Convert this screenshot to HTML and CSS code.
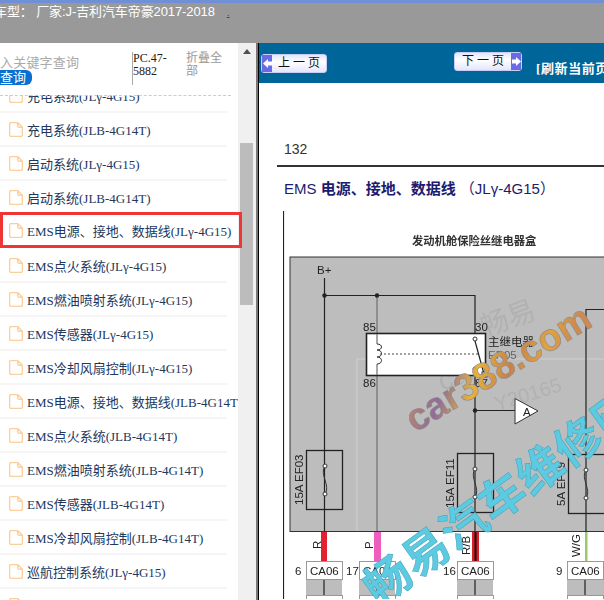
FILE: index.html
```html
<!DOCTYPE html>
<html lang="zh-CN">
<head>
<meta charset="UTF-8">
<meta name="viewport" content="width=device-width, initial-scale=1.0">
<title>车型</title>
<link rel="stylesheet" href="styles.css">
</head>
<body>

<svg class="icon-defs" width="0" height="0">
    <symbol id="fileIcon" viewBox="1 1 12 13">
        <path d="M1.500 2.500a1 1 0 0 1 1-1h6l4 4v7a1 1 0 0 1-1 1h-9a1 1 0 0 1-1-1zM8.500 1.500v3a1 1 0 0 0 1 1h3"/>
    </symbol>
</svg>

<div class="topbar">
    <span class="car-name">车型： 厂家:J-吉利汽车帝豪2017-2018</span>
    <a class="top-link" href="#">.</a>
</div>

<div class="main">
    <aside class="side">
        <div class="search">
            <div class="search-box">
                <div class="placeholder">入关键字查询</div>
                <div class="search-btn">查询</div>
            </div>
            <div class="pc-code">PC.47-5882</div>
            <div class="fold-all">折叠全部</div>
        </div>

        <ul class="tree">
            <li class="row"><svg class="file"><use href="#fileIcon"/></svg>充电系统(JLγ-4G15)</li>
            <li class="row"><svg class="file"><use href="#fileIcon"/></svg>充电系统(JLB-4G14T)</li>
            <li class="row"><svg class="file"><use href="#fileIcon"/></svg>启动系统(JLγ-4G15)</li>
            <li class="row"><svg class="file"><use href="#fileIcon"/></svg>启动系统(JLB-4G14T)</li>
            <li class="row selected"><svg class="file"><use href="#fileIcon"/></svg>EMS电源、接地、数据线(JLγ-4G15)</li>
            <li class="row"><svg class="file"><use href="#fileIcon"/></svg>EMS点火系统(JLγ-4G15)</li>
            <li class="row"><svg class="file"><use href="#fileIcon"/></svg>EMS燃油喷射系统(JLγ-4G15)</li>
            <li class="row"><svg class="file"><use href="#fileIcon"/></svg>EMS传感器(JLγ-4G15)</li>
            <li class="row"><svg class="file"><use href="#fileIcon"/></svg>EMS冷却风扇控制(JLγ-4G15)</li>
            <li class="row"><svg class="file"><use href="#fileIcon"/></svg>EMS电源、接地、数据线(JLB-4G14T)</li>
            <li class="row"><svg class="file"><use href="#fileIcon"/></svg>EMS点火系统(JLB-4G14T)</li>
            <li class="row"><svg class="file"><use href="#fileIcon"/></svg>EMS燃油喷射系统(JLB-4G14T)</li>
            <li class="row"><svg class="file"><use href="#fileIcon"/></svg>EMS传感器(JLB-4G14T)</li>
            <li class="row"><svg class="file"><use href="#fileIcon"/></svg>EMS冷却风扇控制(JLB-4G14T)</li>
            <li class="row"><svg class="file"><use href="#fileIcon"/></svg>巡航控制系统(JLγ-4G15)</li>
            <li class="row"><svg class="file"><use href="#fileIcon"/></svg>巡航控制系统(JLB-4G14T)</li>
        </ul>

        <div class="scrollbar">
            <div class="scroll-up"></div>
            <div class="scroll-thumb"></div>
        </div>
    </aside>

    <div class="divider"></div>

    <section class="content">
        <div class="navbar">
            <div class="page-btn prev-btn">
                <span class="btn-arrow"><svg viewBox="0 0 9 9" width="9" height="9"><path d="M0 4.500 5 0v2.500h4v4H5V9z" fill="#fff"/></svg></span>
                <span class="btn-text">上 一 页</span>
            </div>
            <div class="page-btn next-btn">
                <span class="btn-text">下 一 页</span>
                <span class="btn-arrow"><svg viewBox="0 0 9 9" width="9" height="9"><path d="M9 4.500 4 0v2.500H0v4h4V9z" fill="#fff"/></svg></span>
            </div>
            <div class="refresh">[刷新当前页]</div>
        </div>

        <div class="page">
            <div class="page-no">132</div>
            <h3 class="page-title">EMS <b>电源、接地、数据线</b> （JLγ-4G15）</h3>

            <!-- wiring diagram, coordinates are page pixels -->
            <svg class="diagram" viewBox="283 212 321 388" width="321" height="388">
                <defs>
                    <linearGradient id="carMark" x1="0" y1="0" x2="1" y2="0.2">
                        <stop offset="0" stop-color="#c9915c"/>
                        <stop offset="0.25" stop-color="#8f6c9a"/>
                        <stop offset="0.45" stop-color="#e6b13c"/>
                        <stop offset="0.65" stop-color="#c8814a"/>
                        <stop offset="0.85" stop-color="#e2a23f"/>
                        <stop offset="1" stop-color="#cf8a4e"/>
                    </linearGradient>
                </defs>

                <path d="M283.500 212V600" class="ln"/>
                <text x="412" y="246" class="box-title">发动机舱保险丝继电器盒</text>
                <rect x="290" y="258" width="330" height="274.500" fill="#bdbdbd" stroke="#333"/>

                <!-- faint watermark frame -->
                <path d="M357 532V360H604" fill="none" stroke="#d0d0d0"/>
                <text transform="translate(485 338) rotate(-20)" class="mark-gray">畅易</text>
                <text transform="translate(442 392) rotate(-20)" class="mark-gray">car</text>
                <text transform="translate(497 412) rotate(-17)" class="mark-gray mark-small">Y20165</text>

                <!-- B+ feed -->
                <text x="317" y="275" class="lbl">B+</text>
                <path d="M324.500 279V532M324.500 296.500H475V335" class="ln"/>
                <path d="M377 296.500V532" class="ln-gray"/>
                <circle cx="324.500" cy="296.500" r="2.200" fill="#222"/>
                <circle cx="377" cy="296.500" r="2.200" fill="#222"/>

                <!-- relay -->
                <rect x="366.500" y="334.500" width="119" height="42" fill="#fff" stroke="#222" stroke-width="1.600"/>
                <text x="363" y="332" class="lbl">85</text>
                <text x="475" y="332" class="lbl">30</text>
                <text x="363" y="388" class="lbl">86</text>
                <text x="475" y="388" class="lbl">87</text>
                <path d="M377 335V345M377 365V376" class="ln-gray"/>
                <path d="M377 345c6 0 6 6 0 6c6 0 6 7 0 7c6 0 6 7 0 7" fill="none" stroke="#333"/>
                <path d="M380 355H478" fill="none" stroke="#444" stroke-dasharray="2 2"/>
                <circle cx="475" cy="340" r="2" fill="#fff" stroke="#333"/>
                <circle cx="475" cy="370" r="2" fill="#fff" stroke="#333"/>
                <path d="M475 342 484 375" class="ln"/>
                <rect x="482" y="373" width="5" height="5" fill="#fff" stroke="#333"/>
                <text x="488" y="347" class="lbl">主继电器</text>
                <text x="488" y="360" class="lbl lbl-gray">ER05</text>

                <!-- A link -->
                <path d="M475 376V532M475 411.500H515" class="ln"/>
                <circle cx="475" cy="411.500" r="2.200" fill="#222"/>
                <path d="M515 399.500 538 412 515 425z" fill="#fff" stroke="#333"/>
                <text x="523" y="417" class="lbl">A</text>

                <!-- right branch -->
                <path d="M586 532V310.500H604" class="ln"/>

                <!-- fuses -->
                <rect x="306.500" y="451.500" width="36" height="59" fill="none" stroke="#222" stroke-width="1.300"/>
                <path d="M325 467c-6 8 6 20 0 28" fill="none" stroke="#333"/>
                <circle cx="325" cy="467" r="2" fill="#fff" stroke="#333"/>
                <circle cx="325" cy="495" r="2" fill="#fff" stroke="#333"/>
                <text transform="translate(303 506) rotate(-90)" class="lbl">15A EF03</text>

                <rect x="457.500" y="454.500" width="36" height="59" fill="none" stroke="#222" stroke-width="1.300"/>
                <path d="M475 470c-6 8 6 20 0 28" fill="none" stroke="#333"/>
                <circle cx="475" cy="470" r="2" fill="#fff" stroke="#333"/>
                <circle cx="475" cy="498" r="2" fill="#fff" stroke="#333"/>
                <text transform="translate(454 509) rotate(-90)" class="lbl">15A EF11</text>

                <rect x="568.500" y="455.500" width="40" height="59" fill="none" stroke="#222" stroke-width="1.300"/>
                <path d="M586 471c-6 8 6 20 0 28" fill="none" stroke="#333"/>
                <circle cx="586" cy="471" r="2" fill="#fff" stroke="#333"/>
                <circle cx="586" cy="499" r="2" fill="#fff" stroke="#333"/>
                <text transform="translate(565 507) rotate(-90)" class="lbl">5A EF19</text>

                <!-- wire colours -->
                <rect x="321" y="533" width="6" height="29" fill="#e3202f"/>
                <rect x="374" y="533" width="7" height="29" fill="#ee5fbd"/>
                <rect x="472" y="533" width="7" height="29" fill="#d81f2a"/>
                <rect x="474.500" y="533" width="2" height="29" fill="#111"/>
                <rect x="585" y="533" width="2.500" height="29" fill="#9cc96b"/>
                <text transform="translate(321 550) rotate(-90)" class="lbl">R</text>
                <text transform="translate(373 550) rotate(-90)" class="lbl">P</text>
                <text transform="translate(470 556) rotate(-90)" class="lbl">R/B</text>
                <text transform="translate(580 558) rotate(-90)" class="lbl">W/G</text>

                <!-- connectors -->
                <rect x="306" y="580" width="36" height="20" fill="#bdbdbd"/>
                <rect x="359" y="580" width="36" height="20" fill="#bdbdbd"/>
                <rect x="457" y="580" width="36" height="20" fill="#bdbdbd"/>
                <rect x="567" y="580" width="37" height="20" fill="#bdbdbd"/>
                <path d="M324 580V597M377 580V597M475 580V597M585 580V597" class="ln"/>
                <rect x="306.500" y="562.500" width="36" height="18" class="conn"/>
                <rect x="359.500" y="562.500" width="36" height="18" class="conn"/>
                <rect x="457.500" y="562.500" width="36" height="18" class="conn"/>
                <rect x="567.500" y="562.500" width="36" height="18" class="conn"/>
                <rect x="306.500" y="596.500" width="36" height="18" class="conn"/>
                <rect x="359.500" y="596.500" width="36" height="18" class="conn"/>
                <rect x="457.500" y="596.500" width="36" height="18" class="conn"/>
                <rect x="567.500" y="596.500" width="36" height="18" class="conn"/>
                <text x="310" y="576" class="lbl">CA06</text>
                <text x="363" y="576" class="lbl">CA06</text>
                <text x="461" y="576" class="lbl">CA06</text>
                <text x="571" y="576" class="lbl">CA06</text>
                <text x="295" y="576" class="lbl">6</text>
                <text x="346" y="576" class="lbl">17</text>
                <text x="443" y="576" class="lbl">16</text>
                <text x="556" y="576" class="lbl">9</text>

                <!-- watermarks -->
                <text transform="translate(415 434) rotate(-31)" class="mark-car">car388.com</text>
                <text transform="translate(379 608) rotate(-36)" class="mark-cn">畅易汽车维修网</text>
            </svg>
        </div>
    </section>
</div>

</body>
</html>
```

FILE: styles.css
```css
html, body {
    margin: 0;
    height: 100%;
    overflow: hidden;
}
body {
    font-family: "Liberation Sans", "Noto Sans CJK SC", sans-serif;
    background-color: #fff;
    display: flex;
    flex-direction: column;
    height: 600px;
}
.icon-defs {
    position: absolute;
}

/* top strip */
.topbar {
    height: 40px;
    flex: none;
    border-top: 3px solid #6f8fd6;
    background-color: #999;
    color: #fff;
    font-size: 13px;
    line-height: 16px;
    display: flex;
    align-items: flex-start;
    white-space: nowrap;
}
.car-name {
    margin-left: -6px;
    padding-top: 1px;
    letter-spacing: -0.1px;
}
.top-link {
    color: #2440c0;
    font-size: 10px;
    margin-left: 12px;
    line-height: 16px;
    padding-top: 2px;
}

.main {
    display: flex;
    flex: 1;
    min-height: 0;
}

/* left panel */
.side {
    width: 256px;
    flex: none;
    position: relative;
    overflow: hidden;
    display: flex;
    flex-direction: column;
}
.search {
    height: 52px;
    flex: none;
    display: flex;
    width: 231px;
}
.search-box {
    width: 132px;
    flex: none;
    padding-top: 12px;
    box-sizing: border-box;
}
.placeholder {
    color: #aaa;
    font-size: 13px;
    line-height: 16px;
    letter-spacing: 0.2px;
}
.search-btn {
    width: 32px;
    height: 15px;
    margin-top: -1px;
    background-color: #0a6fd0;
    color: #fff;
    font-size: 13px;
    line-height: 15px;
    border-radius: 0 6px 6px 0;
}
.pc-code {
    width: 54px;
    height: 33px;
    margin-top: 9px;
    box-sizing: border-box;
    border-left: 1px solid #aaa;
    font-family: "Liberation Serif", serif;
    font-size: 12px;
    line-height: 13px;
    color: #222;
    padding-right: 14px;
}
.fold-all {
    width: 37px;
    margin-top: 9px;
    color: #999;
    font-size: 12px;
    line-height: 13px;
}

.tree {
    list-style: none;
    margin: 0;
    padding: 0;
    flex: 1;
    min-height: 0;
    overflow: hidden;
    position: relative;
}
.tree::before {
    content: "";
    display: block;
    width: 231px;
    height: 0;
    border-top: 1px dashed #ccc;
    position: absolute;
    top: 0;
    left: 0;
    z-index: 1;
}
.row {
    width: 218px;
    height: 32px;
    border-bottom: 2px solid #f5f5f5;
    padding-left: 9px;
    display: flex;
    align-items: center;
    gap: 4px;
    font-family: "Liberation Serif", "Noto Sans CJK SC", serif;
    font-size: 13px;
    color: #22375c;
    white-space: nowrap;
}
.row:first-child {
    margin-top: -16px;
}
.row.selected {
    width: 242px;
    height: 36px;
    box-sizing: border-box;
    margin: -3px 0 1px;
    padding-left: 6px;
    border: 3px solid #f03535;
    position: relative;
    z-index: 2;
}
.file {
    width: 14px;
    height: 15px;
    flex: none;
    fill: #fff;
    stroke: #fbd0a0;
    stroke-width: 1.200;
}

.scrollbar {
    position: absolute;
    top: 0;
    right: 0;
    bottom: 0;
    width: 18px;
    background-color: #f0f0f0;
    z-index: 1;
}
.scroll-up {
    width: 0;
    height: 0;
    margin: 6px 0 0 5px;
    border-left: 4px solid transparent;
    border-right: 4px solid transparent;
    border-bottom: 5px solid #505050;
}
.scroll-thumb {
    width: 13px;
    height: 162px;
    margin: 89px 0 0 2px;
    background-color: #bcbcbc;
}

.divider {
    width: 2px;
    flex: none;
    background-color: #777;
    border-right: 1px solid #000;
}

/* right panel */
.content {
    flex: 1;
    min-width: 0;
    overflow: hidden;
}
.navbar {
    height: 40px;
    background-color: #006699;
    display: flex;
    align-items: flex-start;
    padding-left: 2px;
    white-space: nowrap;
}
.page-btn {
    display: flex;
    flex: none;
    height: 19px;
    box-sizing: border-box;
    border: 1px solid #c8cdf5;
    border-radius: 3px;
    background: linear-gradient(#e4e6fb, #fff 40%, #e4e6fb);
    font-family: "Liberation Serif", "Noto Sans CJK SC", serif;
    font-size: 12px;
    line-height: 17px;
    color: #111;
}
.btn-arrow {
    width: 10px;
    background-color: #6a6ae6;
    display: flex;
    align-items: center;
    justify-content: center;
}
.btn-text {
    flex: 1;
    text-align: center;
}
.prev-btn {
    width: 66px;
    margin-top: 11px;
}
.next-btn {
    width: 68px;
    margin: 9px 0 0 127px;
}
.refresh {
    flex: none;
    margin: 18px 0 0 14px;
    color: #fff;
    font-size: 13px;
    font-weight: bold;
    line-height: 16px;
    letter-spacing: 0.6px;
    font-family: "Liberation Serif", "Noto Sans CJK SC", serif;
}

.page {
    padding-left: 18px;
}
.page-no {
    margin: 58px 0 0 7px;
    font-size: 14px;
    line-height: 17px;
    color: #333;
}
.page-title {
    margin: 7px 0 0;
    padding: 13px 0 0 7px;
    border-top: 2px solid #333;
    font-size: 15px;
    font-weight: normal;
    line-height: 18px;
    color: #1d1b6e;
    white-space: nowrap;
    height: 31px;
}
.page-title b {
    font-weight: bold;
}
.diagram {
    display: block;
    margin-left: 6px;
    filter: blur(0.3px);
}

/* diagram text and strokes */
.diagram text {
    font-family: "Liberation Sans", "Noto Sans CJK SC", sans-serif;
}
.ln {
    fill: none;
    stroke: #222;
    stroke-width: 1.200;
}
.ln-gray {
    fill: none;
    stroke: #707070;
    stroke-width: 1.200;
}
.box-title {
    font-size: 11.300px;
    font-weight: bold;
    fill: #333;
}
.lbl {
    font-size: 11.500px;
    fill: #222;
}
.lbl-gray {
    fill: #666;
}
.conn {
    fill: #fff;
    stroke: #999;
}
.mark-gray {
    font-size: 28px;
    fill: #a6a6a6;
    opacity: 0.5;
}
.mark-small {
    font-size: 20px;
}
.mark-car {
    font-size: 38px;
    font-weight: bold;
    fill: url(#carMark);
    stroke: #8a8a8a;
    stroke-width: 0.6;
}
.mark-cn {
    font-size: 46px;
    font-weight: bold;
    fill: #5ccbe2;
    stroke: #3f9fb8;
    stroke-width: 0.5;
    letter-spacing: 1px;
}
```
